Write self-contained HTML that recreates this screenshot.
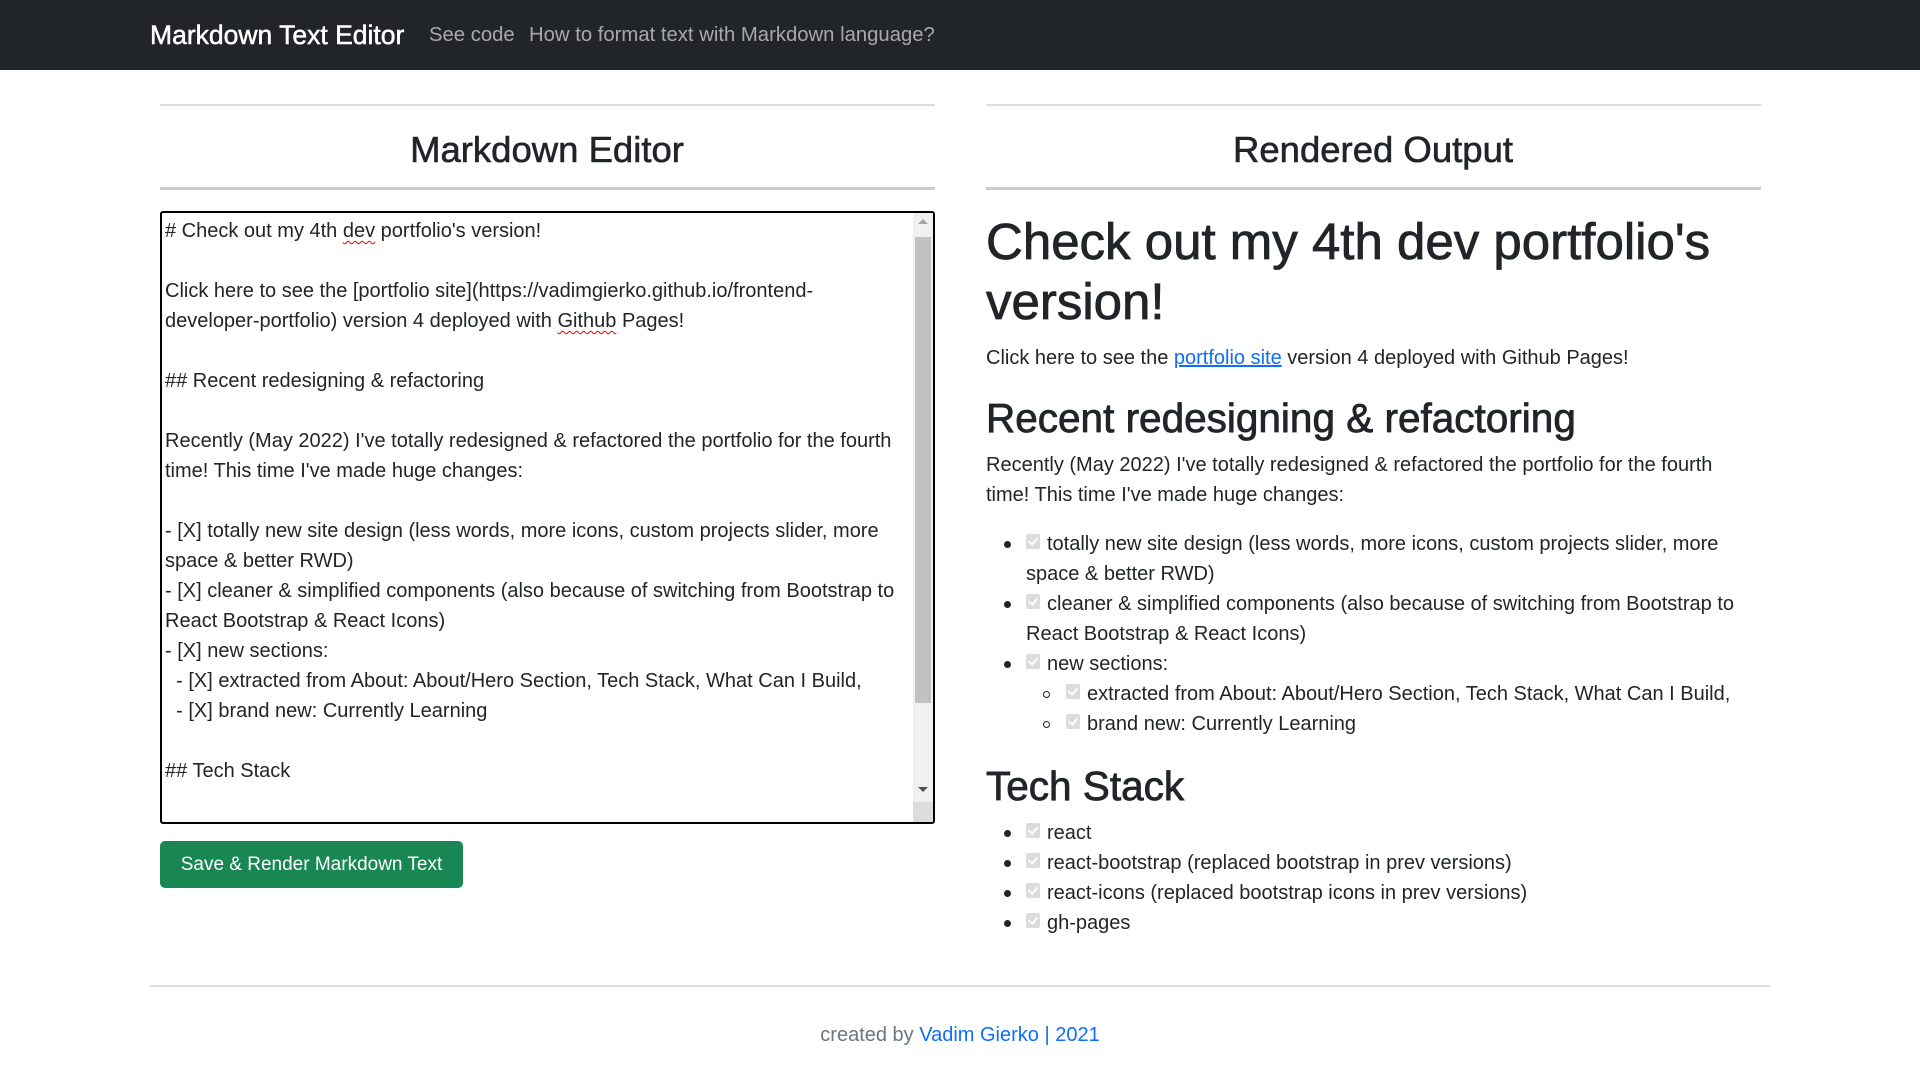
<!DOCTYPE html>
<html><head><meta charset="utf-8"><style>
*{box-sizing:border-box;margin:0;padding:0}
body{width:1920px;height:1080px;overflow:hidden;background:#fff;font-family:"Liberation Sans",sans-serif;color:#212529;position:relative}
.nav{position:absolute;left:0;top:0;width:1920px;height:70px;background:#212529}
.brand{position:absolute;left:150px;top:20px;font-size:26.5px;color:#fff;-webkit-text-stroke:0.5px #fff}
.nl{position:absolute;top:24px;font-size:20.3px;color:rgba(255,255,255,.6)}
.a{position:absolute;white-space:nowrap}
.hr1{position:absolute;height:2px;background:#ddd}
.hr2{position:absolute;height:3px;background:#ccc}
h3{position:absolute;font-weight:normal;font-size:36.5px;text-align:center;width:774px;-webkit-text-stroke:0.6px #212529}
.ta{position:absolute;left:160px;top:211px;width:775px;height:613px;border:2px solid #000;border-radius:3px;overflow:hidden;font-size:20px;line-height:30px;padding:3px 0 0 3px}
.ta .ln{white-space:pre;height:30px}
.sb{position:absolute;right:0;top:0;width:20px;height:100%;background:#f0f0f0}
.th{position:absolute;left:2px;width:16px;top:24px;height:466px;background:#c1c1c1}
.up{position:absolute;left:5px;top:6px;width:0;height:0;border-left:5px solid transparent;border-right:5px solid transparent;border-bottom:5px solid #a3a3a3}
.dn{position:absolute;left:5px;bottom:30px;width:0;height:0;border-left:5px solid transparent;border-right:5px solid transparent;border-top:5px solid #505050}
.grip{position:absolute;right:0;bottom:0;width:20px;height:20px;background:#dcdcdc}
.u{text-decoration:underline wavy #e00;text-decoration-thickness:1px;text-underline-offset:3px}
.btn{position:absolute;left:160px;top:841px;width:303px;height:47px;background:#198754;color:#fff;border-radius:5px;font-size:19px;text-align:center;line-height:47px}
.r{position:absolute;left:986px;font-size:20px;white-space:nowrap}
.hd{-webkit-text-stroke:0.8px #212529;font-weight:normal}
.cb{display:inline-block;width:14px;height:15px;background:#dcdcdc;border-radius:2px;vertical-align:1px;margin-right:7px;position:relative}
.cb:after{content:"";position:absolute;left:4px;top:2px;width:4px;height:7px;border:solid #fff;border-width:0 2px 2px 0;transform:rotate(40deg)}
.dot{position:absolute;width:7px;height:7px;border-radius:50%;background:#212529}
.circ{position:absolute;width:7px;height:7px;border-radius:50%;border:1px solid #212529}
</style></head><body>
<div class="nav"><div class="brand">Markdown Text Editor</div>
<div class="nl" style="left:429px">See code</div>
<div class="nl" style="left:529px">How to format text with Markdown language?</div></div>

<div class="hr1" style="left:160px;top:104px;width:775px"></div>
<div class="hr1" style="left:986px;top:104px;width:775px"></div>
<h3 style="left:160px;top:129px">Markdown Editor</h3>
<h3 style="left:986px;top:129px">Rendered Output</h3>
<div class="hr2" style="left:160px;top:187px;width:775px"></div>
<div class="hr2" style="left:986px;top:187px;width:775px"></div>

<div class="ta">
<div class="ln"># Check out my 4th <span class="u">dev</span> portfolio's version!</div>
<div class="ln"></div>
<div class="ln">Click here to see the [portfolio site](https://vadimgierko.github.io/frontend-</div>
<div class="ln">developer-portfolio) version 4 deployed with <span class="u">Github</span> Pages!</div>
<div class="ln"></div>
<div class="ln">## Recent redesigning &amp; refactoring</div>
<div class="ln"></div>
<div class="ln">Recently (May 2022) I've totally redesigned &amp; refactored the portfolio for the fourth</div>
<div class="ln">time! This time I've made huge changes:</div>
<div class="ln"></div>
<div class="ln">- [X] totally new site design (less words, more icons, custom projects slider, more</div>
<div class="ln">space &amp; better RWD)</div>
<div class="ln">- [X] cleaner &amp; simplified components (also because of switching from Bootstrap to</div>
<div class="ln">React Bootstrap &amp; React Icons)</div>
<div class="ln">- [X] new sections:</div>
<div class="ln">  - [X] extracted from About: About/Hero Section, Tech Stack, What Can I Build,</div>
<div class="ln">  - [X] brand new: Currently Learning</div>
<div class="ln"></div>
<div class="ln">## Tech Stack</div>
<div class="sb"><div class="up"></div><div class="th"></div><div class="dn"></div><div class="grip"></div></div>
</div>
<div class="btn">Save &amp; Render Markdown Text</div>

<div class="r hd" style="top:212px;font-size:51px;line-height:60px">Check out my 4th dev portfolio's<br>version!</div>
<div class="r" style="top:343px;line-height:30px">Click here to see the <span style="color:#0d6efd;text-decoration:underline">portfolio site</span> version 4 deployed with Github Pages!</div>
<div class="r hd" style="top:393px;font-size:40.5px;line-height:50px">Recent redesigning &amp; refactoring</div>
<div class="r" style="top:450px;line-height:30px">Recently (May 2022) I've totally redesigned &amp; refactored the portfolio for the fourth<br>time! This time I've made huge changes:</div>

<div class="dot" style="left:1004px;top:541px"></div>
<div class="r" style="left:1026px;top:529px;line-height:30px"><span class="cb"></span>totally new site design (less words, more icons, custom projects slider, more<br>space &amp; better RWD)</div>
<div class="dot" style="left:1004px;top:601px"></div>
<div class="r" style="left:1026px;top:589px;line-height:30px"><span class="cb"></span>cleaner &amp; simplified components (also because of switching from Bootstrap to<br>React Bootstrap &amp; React Icons)</div>
<div class="dot" style="left:1004px;top:661px"></div>
<div class="r" style="left:1026px;top:649px;line-height:30px"><span class="cb"></span>new sections:</div>
<div class="circ" style="left:1043px;top:691px"></div>
<div class="r" style="left:1066px;top:679px;line-height:30px"><span class="cb"></span>extracted from About: About/Hero Section, Tech Stack, What Can I Build,</div>
<div class="circ" style="left:1043px;top:721px"></div>
<div class="r" style="left:1066px;top:709px;line-height:30px"><span class="cb"></span>brand new: Currently Learning</div>

<div class="r hd" style="top:761px;font-size:40.5px;line-height:50px">Tech Stack</div>
<div class="dot" style="left:1004px;top:830px"></div>
<div class="r" style="left:1026px;top:818px;line-height:30px"><span class="cb"></span>react</div>
<div class="dot" style="left:1004px;top:860px"></div>
<div class="r" style="left:1026px;top:848px;line-height:30px"><span class="cb"></span>react-bootstrap (replaced bootstrap in prev versions)</div>
<div class="dot" style="left:1004px;top:890px"></div>
<div class="r" style="left:1026px;top:878px;line-height:30px"><span class="cb"></span>react-icons (replaced bootstrap icons in prev versions)</div>
<div class="dot" style="left:1004px;top:920px"></div>
<div class="r" style="left:1026px;top:908px;line-height:30px"><span class="cb"></span>gh-pages</div>

<div class="hr1" style="left:150px;top:985px;width:1620px"></div>
<div class="a" style="left:0;width:1920px;text-align:center;top:1024px;font-size:20px;color:#6c757d">created by <span style="color:#0d6efd">Vadim Gierko | 2021</span></div>
</body></html>
